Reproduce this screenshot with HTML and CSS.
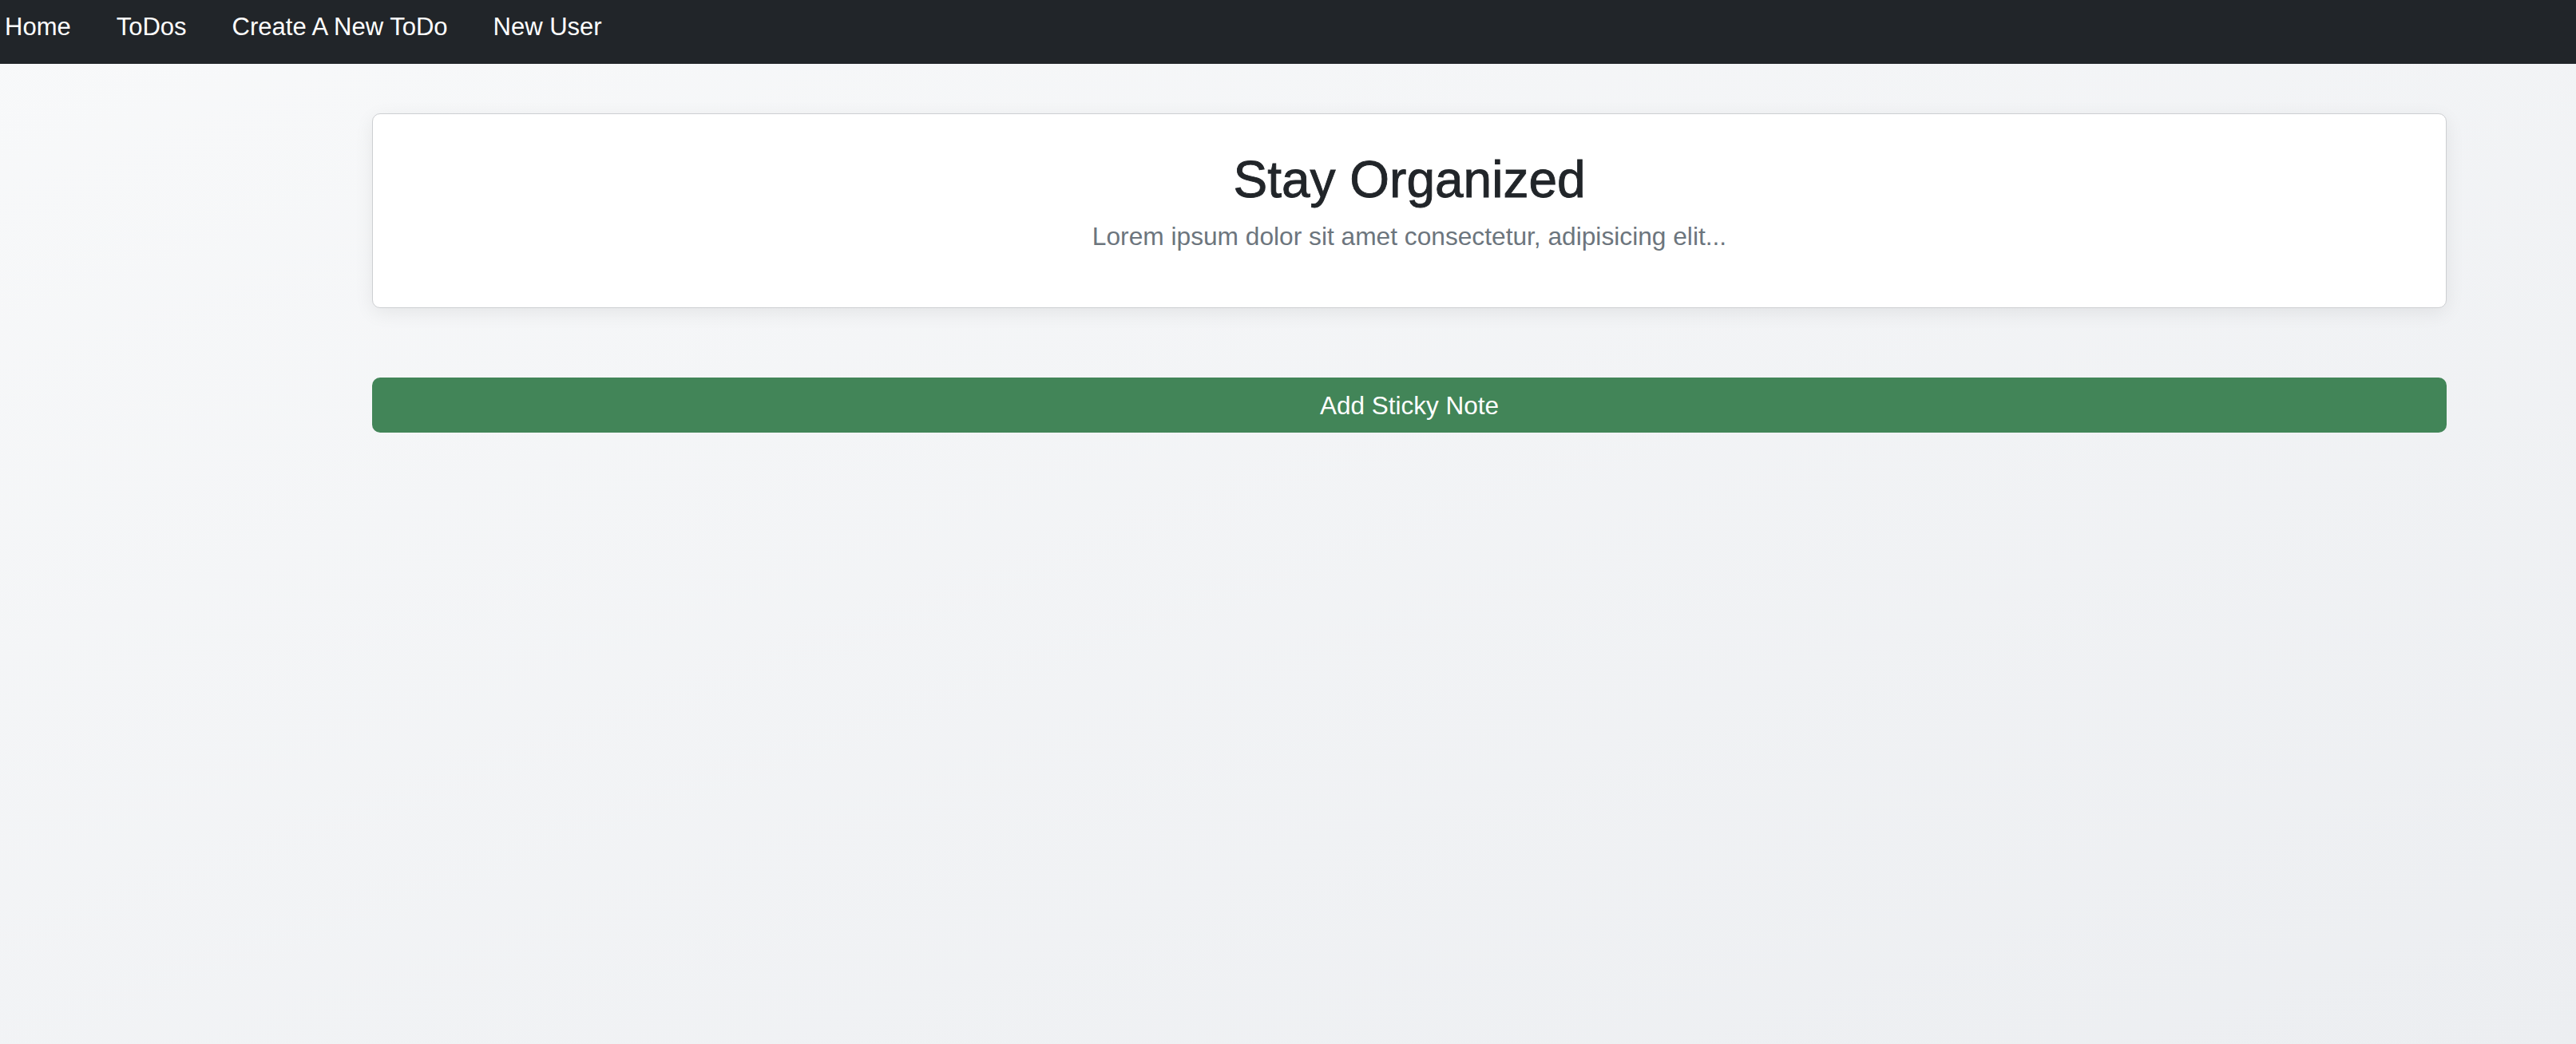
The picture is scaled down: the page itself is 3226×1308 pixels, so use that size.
FILE: index.html
```html
<!DOCTYPE html>
<html lang="en">
<head>
<meta charset="utf-8">
<title>Stay Organized</title>
<link rel="stylesheet" href="styles.css">
</head>
<body>
<nav class="navbar">
  <a class="nav-link" href="#">Home</a>
  <a class="nav-link" href="#">ToDos</a>
  <a class="nav-link" href="#">Create A New ToDo</a>
  <a class="nav-link" href="#">New User</a>
</nav>
<main class="main">
  <section class="hero-card">
    <h1 class="hero-title">Stay Organized</h1>
    <p class="hero-text">Lorem ipsum dolor sit amet consectetur, adipisicing elit...</p>
  </section>
  <button class="add-btn" type="button">Add Sticky Note</button>
</main>
</body>
</html>
```
FILE: styles.css
```css
* { box-sizing: border-box; }
html, body { margin: 0; padding: 0; }
body {
  font-family: "Liberation Sans", Arial, sans-serif;
  min-height: 1308px;
  background: linear-gradient(160deg, #f8f9fa 0%, #eceef1 100%);
  color: #212529;
}
.navbar {
  height: 80px;
  background: #212529;
  display: flex;
  align-items: flex-start;
  gap: 57px;
  padding: 16px 0 0 6px;
}
.nav-link {
  color: #ffffff;
  text-decoration: none;
  font-size: 31px;
  line-height: normal;
}
.main {
  padding: 62px 162px 0 466px;
  display: flex;
  flex-direction: column;
}
.hero-card {
  background: #ffffff;
  border: 1.5px solid #cdcfd2;
  border-radius: 10px;
  box-shadow: 0 6px 24px rgba(0, 0, 0, 0.07);
  height: 244px;
  padding-top: 44px;
  text-align: center;
}
.hero-title {
  margin: 0;
  font-size: 64px;
  font-weight: 400;
  line-height: 1.2;
  color: #212529;
  -webkit-text-stroke: 0.9px #212529;
}
.hero-text {
  margin: 9px 0 0;
  font-size: 31.7px;
  line-height: 1.5;
  color: #6c757d;
}
.add-btn {
  margin-top: 87px;
  height: 69px;
  width: 100%;
  border: none;
  border-radius: 10px;
  background: #428558;
  color: #ffffff;
  font-family: "Liberation Sans", Arial, sans-serif;
  font-size: 31.5px;
  line-height: 1.5;
  padding: 12px 0 10px;
}
```
